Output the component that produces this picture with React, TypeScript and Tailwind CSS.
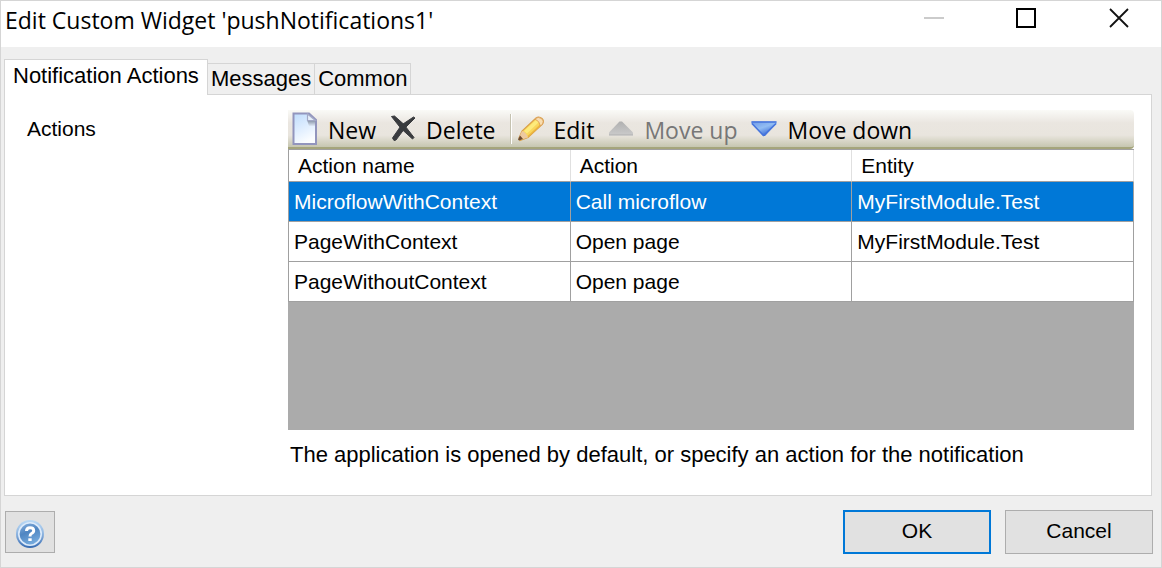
import { useState } from "react";
import type { ReactNode } from "react";

const rows = [
  { name: "MicroflowWithContext", action: "Call microflow", entity: "MyFirstModule.Test" },
  { name: "PageWithContext", action: "Open page", entity: "MyFirstModule.Test" },
  { name: "PageWithoutContext", action: "Open page", entity: "" },
];

function NewIcon() {
  return (
    <svg width="26" height="34" viewBox="0 0 26 34" aria-hidden="true">
      <defs>
        <linearGradient id="page" x1="0" y1="0" x2="0.4" y2="1">
          <stop offset="0" stopColor="#bfdcfb" />
          <stop offset="0.5" stopColor="#dcecff" />
          <stop offset="1" stopColor="#fbfdff" />
        </linearGradient>
        <linearGradient id="fold" x1="0" y1="0" x2="0" y2="1">
          <stop offset="0" stopColor="#7f8ca0" />
          <stop offset="1" stopColor="#dfe9f6" />
        </linearGradient>
      </defs>
      <path d="M1.5 1.5H17L24 8V32H1.5Z" fill="url(#page)" stroke="#9295bd" strokeWidth="2" />
      <path d="M15 8H23V14H17Z" fill="url(#fold)" />
      <path d="M15.500 2V8.500H23.500Z" fill="#e6effa" stroke="#a3a9c6" strokeWidth="1.2" />
    </svg>
  );
}

function DeleteIcon() {
  return (
    <svg width="26" height="28" viewBox="0 0 26 28" aria-hidden="true">
      <path d="M1.500 1.500L4.500 1L13.500 9L24 22.500L22.500 24L11 13.500Z" fill="#393b3e" stroke="#393b3e" strokeLinejoin="round" />
      <path d="M25 3L23.500 2L11.500 10L2.500 23L4 25.500L6 25L15 13Z" fill="#393b3e" stroke="#393b3e" strokeLinejoin="round" />
    </svg>
  );
}

function EditIcon() {
  return (
    <svg width="26" height="28" viewBox="1 0 26 28" aria-hidden="true">
      <path d="M2 23L5 16L19 3Q22 1 25 3.500Q27.500 6 25.500 9L11 22.500L3 25.500Z" fill="#f9d65c" stroke="#d9a04a" strokeWidth="1.2" />
      <path d="M7 16L19 5L22 7L10 18.500Z" fill="#fdeb7c" />
      <path d="M10.500 21L23 9.500L24 10.500L11.500 22Z" fill="#ecb63f" />
      <path d="M18 4Q21 1 24.500 3.500Q27.500 6 25.500 9L23.500 11Q22.500 6 18 4Z" fill="#f8ddb0" stroke="#d99b55" strokeWidth="0.8" />
      <path d="M5 16Q9 17 11 22.500L3 25L1.500 23.500Z" fill="#edc9a0" />
      <path d="M3 20.500L6 24L2 25.500L1 24.500Z" fill="#6d4c31" />
    </svg>
  );
}

function UpIcon() {
  return (
    <svg width="26" height="16" viewBox="0 0 26 16" aria-hidden="true">
      <defs>
        <linearGradient id="up" x1="0" y1="0" x2="0" y2="1">
          <stop offset="0" stopColor="#b0b0b0" />
          <stop offset="1" stopColor="#cbcbcb" />
        </linearGradient>
      </defs>
      <path d="M11.500 0.500H14L25 11.500V14.500H1V11.500Z" fill="url(#up)" />
      <path d="M1 13H25V14.500H1Z" fill="#bcbcbc" />
    </svg>
  );
}

function DownIcon() {
  return (
    <svg width="26" height="16" viewBox="0 0 26 16" aria-hidden="true">
      <defs>
        <linearGradient id="down" x1="0" y1="0" x2="0.600" y2="1">
          <stop offset="0" stopColor="#6f99e6" />
          <stop offset="0.500" stopColor="#92bdf3" />
          <stop offset="1" stopColor="#3566d3" />
        </linearGradient>
      </defs>
      <path d="M0.500 0.500H25.500V3L14 15H12L0.500 3Z" fill="url(#down)" />
      <path d="M0.500 1H25.500M1 2.500L12.500 14.500L25 2.500" fill="none" stroke="#4674dc" strokeWidth="1.500" />
    </svg>
  );
}

function HelpIcon() {
  return (
    <svg width="30" height="30" viewBox="0 0 30 30" aria-hidden="true">
      <defs>
        <linearGradient id="ring" x1="0" y1="0" x2="0" y2="1">
          <stop offset="0" stopColor="#bcdaf5" />
          <stop offset="0.500" stopColor="#8db4e0" />
          <stop offset="1" stopColor="#3368b0" />
        </linearGradient>
        <linearGradient id="disc" x1="0" y1="0" x2="0.400" y2="1">
          <stop offset="0" stopColor="#8cb3df" />
          <stop offset="0.500" stopColor="#4f86c2" />
          <stop offset="1" stopColor="#74a9dc" />
        </linearGradient>
      </defs>
      <circle cx="15" cy="15" r="14" fill="url(#ring)" />
      <circle cx="15" cy="15" r="11.200" fill="url(#disc)" stroke="#dceafa" strokeWidth="1.600" />
      <path d="M11.500 12Q11.500 8.700 15 8.700Q18.700 8.700 18.700 11.500Q18.700 13.500 16.500 14.500Q15 15.300 15 17.500" fill="none" stroke="#fff" strokeWidth="3" />
      <path d="M13.300 19.300H16.700V22H13.300Z" fill="#fff" />
    </svg>
  );
}

function ToolButton({ icon, label, disabled }: { icon: ReactNode; label: string; disabled?: boolean }) {
  return (
    <button
      type="button"
      disabled={disabled}
      className="flex items-center gap-2.5 whitespace-nowrap disabled:text-[#777777]"
    >
      {icon}
      <span className="pt-0.5">{label}</span>
    </button>
  );
}

export default function App() {
  const [tab, setTab] = useState(0);
  const [selected, setSelected] = useState(0);

  return (
    <main className="flex min-h-screen flex-col border border-[#d5d5d5] bg-[#efefef] font-['Liberation_Sans',Arial,sans-serif] text-[21px] leading-6 text-black">
      <header className="flex h-[46px] items-start justify-between bg-white pl-1">
        <h1 className="pt-[3px] font-['Open_Sans','Noto_Sans',sans-serif] text-[23px] leading-8">
          Edit Custom Widget &apos;pushNotifications1&apos;
        </h1>
        <div className="flex pr-[31px] pt-1.5">
          <button type="button" aria-label="Minimize" disabled className="mr-[70px]">
            <svg width="22" height="22" viewBox="0 0 22 22"><path d="M1 11H21" stroke="#cbcbcb" strokeWidth="2" /></svg>
          </button>
          <button type="button" aria-label="Maximize" className="mr-[71px]">
            <svg width="22" height="22" viewBox="0 0 22 22"><path d="M2 2H20V20H2Z" fill="none" stroke="#000" strokeWidth="2" /></svg>
          </button>
          <button type="button" aria-label="Close">
            <svg width="22" height="22" viewBox="0 0 22 22"><path d="M2 2L20 20M20 2L2 20" stroke="#111" strokeWidth="1.800" /></svg>
          </button>
        </div>
      </header>

      <div className="flex flex-1 flex-col pb-[13px] pl-[3px] pr-[9px] pt-3">
        <div role="tablist" className="relative z-10 -mb-px flex items-end text-[22px]">
          {["Notification Actions", "Messages", "Common"].map((label, i) => (
            <button
              key={label}
              type="button"
              role="tab"
              aria-selected={tab === i}
              onClick={() => setTab(i)}
              className={
                tab === i
                  ? "h-9 border border-b-0 border-[#d5d5d5] bg-white px-2 pb-1"
                  : "h-8 border border-l-0 border-[#d5d5d5] px-[3px]"
              }
            >
              {label}
            </button>
          ))}
        </div>

        <section className="flex flex-1 border border-[#d5d5d5] bg-white pb-7 pl-[22px] pr-[17px] pt-[15px]">
          <h2 className="w-[261px] shrink-0 pt-[7px]">Actions</h2>
          <div className="flex min-w-0 flex-1 flex-col">
            <div className="flex h-[39px] items-center gap-3.5 rounded-r-sm border-b-2 border-[#a5a57c] bg-[linear-gradient(to_bottom,#fafaf7,#eae6e0_35%,#e9e5de_68%,#c6c6b0)] pl-1 font-['Open_Sans','Noto_Sans',sans-serif] text-[23px]">
              <ToolButton icon={<NewIcon />} label="New" />
              <ToolButton icon={<DeleteIcon />} label="Delete" />
              <div className="flex items-center gap-1.5">
                <span className="h-[30px] w-0.5 border-l border-r border-l-[#c5c2b0] border-r-white" />
                <ToolButton icon={<EditIcon />} label="Edit" />
              </div>
              <ToolButton icon={<UpIcon />} label="Move up" disabled />
              <ToolButton icon={<DownIcon />} label="Move down" />
            </div>
            <div className="flex-1 bg-[#ababab]">
              <table className="w-full table-fixed border-separate border-spacing-0 border-l border-t border-[#a0a0a0] bg-white text-left">
                <thead>
                  <tr className="h-8">
                    {["Action name", "Action", "Entity"].map((h) => (
                      <th key={h} className="border-b border-r border-b-[#a0a0a0] border-r-[#e0e0e0] px-[9px] py-0 font-normal">
                        {h}
                      </th>
                    ))}
                  </tr>
                </thead>
                <tbody>
                  {rows.map((row, i) => (
                    <tr
                      key={row.name}
                      onClick={() => setSelected(i)}
                      className={selected === i ? "h-10 bg-[#0078d7] text-white" : "h-10"}
                    >
                      <td className="border-b border-r border-[#a0a0a0] px-[5px] py-0">{row.name}</td>
                      <td className="border-b border-r border-[#a0a0a0] px-[5px] py-0">{row.action}</td>
                      <td className="border-b border-r border-[#a0a0a0] px-[5px] py-0">{row.entity}</td>
                    </tr>
                  ))}
                </tbody>
              </table>
            </div>
            <p className="pl-0.5 pt-[13px] text-[22px]">
              The application is opened by default, or specify an action for the notification
            </p>
          </div>
        </section>

        <footer className="flex items-center justify-between pt-3.5">
          <button
            type="button"
            aria-label="Help"
            className="ml-px flex h-[42px] w-[50px] items-center justify-center border border-[#adadad] bg-[#e1e1e1] pt-1"
          >
            <HelpIcon />
          </button>
          <div className="-mr-px flex gap-3.5">
            <button type="button" className="h-11 w-[148px] border-2 border-[#0078d7] bg-[#e1e1e1] pb-0.5">OK</button>
            <button type="button" className="h-11 w-[148px] border border-[#adadad] bg-[#e1e1e1] pb-0.5">Cancel</button>
          </div>
        </footer>
      </div>
    </main>
  );
}
